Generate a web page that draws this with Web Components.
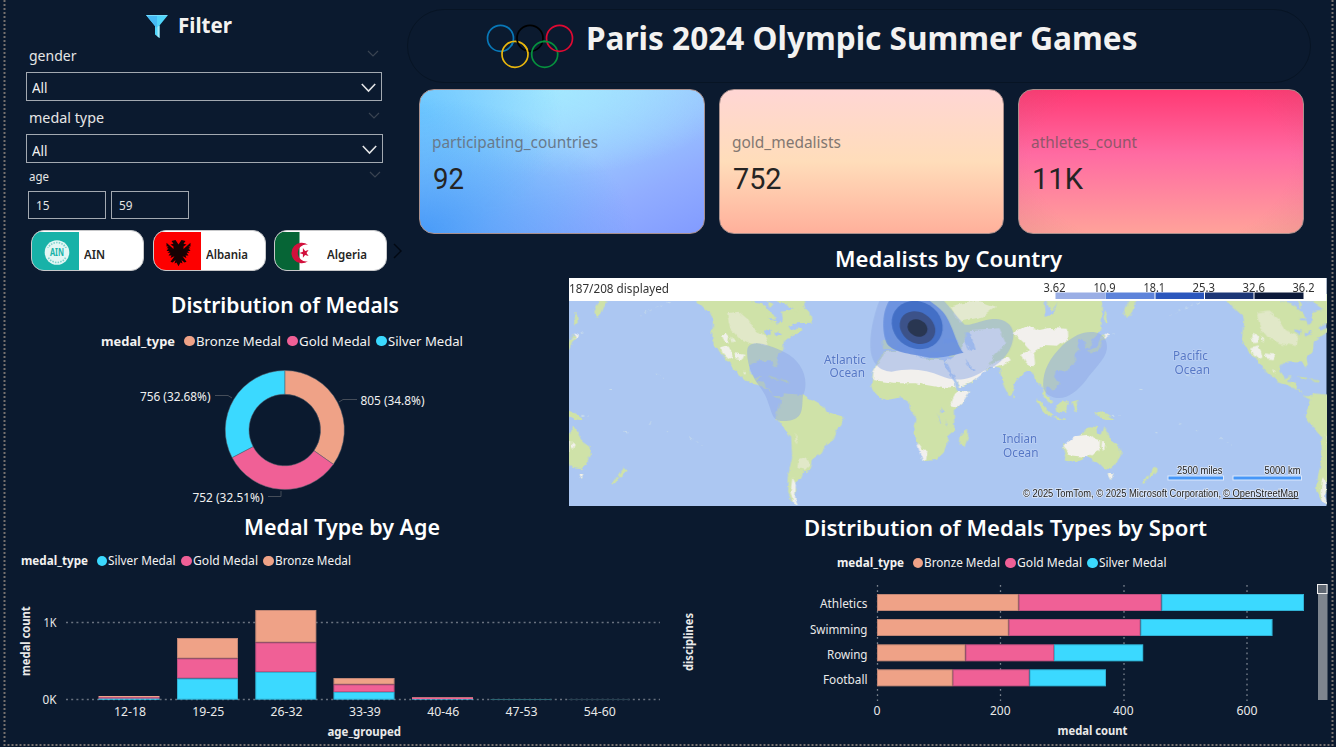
<!DOCTYPE html>
<html lang="en">
<head>
<meta charset="utf-8">
<title>Paris 2024 Olympic Summer Games</title>
<style>
html,body{margin:0;width:1336px;height:747px;overflow:hidden;background:#0b1a2f}
body{font-family:"Noto Sans","Open Sans",sans-serif;color:#f3f2f1}
</style>
</head>
<body>
<olympic-dashboard></olympic-dashboard>

<script>
const define = (name, html, setup) => customElements.define(name, class extends HTMLElement {
  connectedCallback() {
    if (this.shadowRoot) return;
    const root = this.attachShadow({ mode: 'open' });
    root.innerHTML = typeof html === 'function' ? html(this) : html;
    if (setup) setup(this, root);
  }
});

const BRONZE = '#efa287', GOLD = '#f06096', SILVER = '#3bd9ff';

/* One line of text condensed or widened to a set width */
define('fit-text', el => `<style>
  :host{display:inline-block;white-space:nowrap;width:${el.getAttribute('w')}px;flex:none}
  span{display:inline-block;transform-origin:0 50%}
</style><span><slot></slot></span>`, (el, root) => {
  const s = root.querySelector('span');
  const natural = s.getBoundingClientRect().width;
  if (natural) s.style.transform = `scaleX(${+el.getAttribute('w') / natural})`;
});

define('section-title', `<style>
  :host{display:flex;height:30px;line-height:30px;font-size:22px;font-weight:600;color:#fff}
</style><slot></slot>`);

define('chart-legend', el => {
  const colors = { Bronze: BRONZE, Gold: GOLD, Silver: SILVER };
  const items = el.getAttribute('items').split(',').map(i => i.split(':'));
  return `<style>
    :host{display:flex;align-items:center;height:18px;line-height:18px;font-size:${el.getAttribute('size')}px}
    b{font-weight:700;margin-right:${el.getAttribute('lead')}px}
    .i{display:flex;align-items:center;margin-right:${el.getAttribute('gap')}px}
    i{width:10.8px;height:10.8px;border-radius:50%;margin-right:1.2px}
  </style><b><fit-text w="${el.getAttribute('key-width')}">medal_type</fit-text></b>` +
  items.map(([n, w]) => `<span class="i"><i style="background:${colors[n]}"></i><fit-text w="${w}">${n} Medal</fit-text></span>`).join('');
});

define('slicer-label', `<style>
  :host{display:flex;justify-content:space-between;align-items:center;height:16px;line-height:16px;padding-left:29px;color:#e6e6e6}
  svg{width:12px;height:8px;position:relative;top:-2px;fill:none;stroke:#3a4452;stroke-width:1.2}
  ::slotted(fit-text){margin-top:-2px}
</style><slot></slot><svg viewBox="0 0 12 8"><path d="M1 1l5 5 5-5"/></svg>`);

define('slicer-select', `<style>
  :host{display:flex;box-sizing:border-box;height:29px;border:1.5px solid #a3a9b1;align-items:center;justify-content:space-between;padding:2px 5px 0 5px;font-size:14px}
  svg{width:15px;height:10px;fill:none;stroke:#e3e4e6;stroke-width:1.6}
</style><fit-text w="15.5">All</fit-text><svg viewBox="0 0 15 10"><path d="M.8 1l6.7 7 6.7-7"/></svg>`);

define('slicer-number', `<style>
  :host{display:block;box-sizing:border-box;width:78px;height:28px;border:1.5px solid #a3a9b1;padding:0 7px;font-size:12px;line-height:27px;color:#e4e4e4}
</style><slot></slot>`);

define('country-tile', `<style>
  :host{display:flex;box-sizing:border-box;width:113px;height:41px;border-radius:13px;border:1.5px solid #c7c8ca;background:#fff;overflow:hidden;color:#252423;font-size:12.5px;font-weight:600;align-items:center}
  ::slotted(svg){flex:none;width:47px;height:38px;margin-right:5px;align-self:flex-end}
  ::slotted(fit-text){padding-top:8px}
</style><slot></slot>`);

define('filter-panel', `<style>
  :host{display:block;padding-top:2px}
  .title{display:flex;height:46px;align-items:center;padding-left:146px;font-size:22px;font-weight:700;line-height:30px}
  .title svg{width:22px;height:24px;margin-right:10px;margin-top:4px}
  .title fit-text{margin-top:-2px}
  slicer-label{font-size:15px}
  .l1{width:350px}.l2{width:351px;margin-top:9px}.l3{width:352px;margin-top:6px;font-size:12px}
  .l3 fit-text{margin-top:0}
  .s1{width:356px;margin:8px 0 0 26px}
  .s2{width:357px;margin:8px 0 0 26px}
  .s2{padding-top:3px}
  .nums{display:flex;gap:5px;margin:6px 0 0 28px}
  .tiles{display:flex;gap:8.5px;margin:11px 0 0 31px;align-items:center}
  .next{width:9px;height:16px;fill:none;stroke:#020812;stroke-width:1.4;margin-left:-3px}
</style>
<div class="title"><svg viewBox="0 0 22 24"><path d="M0 0h11v12z" fill="#3fb5f2"/><path d="M0 0h22L13.5 10.500V23L9 19.500V11z" fill="#50d5fa"/><path d="M0 0h11v13l-2-2z" fill="#47baf4"/><path d="M13.500 10.500V23L11.500 21.500V12z" fill="#a6e9f8"/><path d="M1 .5h20" stroke="#78dcfb"/></svg><fit-text w="54">Filter</fit-text></div>
<slicer-label class="l1"><fit-text w="47.500">gender</fit-text></slicer-label>
<slicer-select class="s1"></slicer-select>
<slicer-label class="l2"><fit-text w="75">medal type</fit-text></slicer-label>
<slicer-select class="s2"></slicer-select>
<slicer-label class="l3"><fit-text w="20">age</fit-text></slicer-label>
<div class="nums"><slicer-number><fit-text w="13.500">15</fit-text></slicer-number><slicer-number><fit-text w="13.500">59</fit-text></slicer-number></div>
<div class="tiles">
  <country-tile><svg viewBox="0 0 47 38" preserveAspectRatio="none"><path fill="#18b2a8" d="M0 0h47v38H0z"/><g transform="translate(25 20.500)"><circle r="12.300" fill="#e3f6f4"/><circle r="10" fill="none" stroke="#7fd2cc" stroke-width="1.700" stroke-dasharray="1.500 1.200"/><path fill="#e3f6f4" d="M-11-4.500h22v9h-22z"/><text y="3.600" text-anchor="middle" font-size="10" font-weight="700" fill="#18b2a8" textLength="14" lengthAdjust="spacingAndGlyphs">AIN</text></g></svg><fit-text w="21">AIN</fit-text></country-tile>
  <country-tile><svg viewBox="0 0 47 38" preserveAspectRatio="none"><path fill="#fd0000" d="M0 0h47v38H0z"/><g transform="translate(24.500 9) scale(1 .9)" fill="#160203"><path d="M0 4L-3-1-7 0l2 3-3 1 3 2v3l-7-7v4h2l-2 2h2l-2 3h3l-2 2h3l-2 3h3l-1 3 4-2-4 6 2 1 3-3-1 4 2-1 2 4 2-4 2 1-1-4 3 3 2-1-4-6 4 2-1-3h3l-2-3h3l-2-2h3l-2-3h2l-2-2h2v-4l-7 7V6l3-2-3-1 2-3-4-1z"/></g></svg><fit-text w="42">Albania</fit-text></country-tile>
  <country-tile><svg viewBox="0 0 47 38" preserveAspectRatio="none"><path fill="#fff" d="M0 0h47v38H0z"/><path fill="#066536" d="M0 0h24.500v38H0z"/><path fill="#d2103c" d="M33 12.800a10.300 10.300 0 1 0 0 16.400 8.400 8.400 0 1 1 0-16.400M24.500 21l3.400-1.200v-3.700l2.200 3 3.500-1.100-2.100 3 2.100 3-3.500-1.100-2.200 2.900v-3.600z"/></svg><fit-text w="40">Algeria</fit-text></country-tile>
  <svg class="next" viewBox="0 0 9 16"><path d="M1 1l7 7-7 7"/></svg>
</div>`);

define('page-banner', `<style>
  :host{display:flex;box-sizing:border-box;width:904px;height:74px;border:1.5px solid #071424;border-radius:37px;align-items:center;padding-left:76px}
  svg{width:94px;height:50px;margin-top:-1px;fill:none;stroke-width:1.7}
  fit-text{font-size:32.500px;font-weight:700;line-height:44px;margin:-16px 0 0 8px}
</style>
<svg viewBox="484 21 94 50"><circle cx="500.500" cy="38.300" r="13" stroke="#0878b8"/><circle cx="515" cy="54.300" r="13" stroke="#e8b60d"/><circle cx="530" cy="38.300" r="13" stroke="#000"/><circle cx="544.700" cy="54.300" r="13" stroke="#06913e"/><circle cx="559.500" cy="38.300" r="13" stroke="#df0a32"/><path d="M512.800 42.500a13 13 0 0 1-1.500 3.200" stroke="#0878b8"/><path d="M527.900 52.500a13 13 0 0 0-4-7.600" stroke="#e8b60d"/><path d="M542.700 41.500a13 13 0 0 1 5.500.2" stroke="#06913e"/></svg>
<fit-text w="551.500">Paris 2024 Olympic Summer Games</fit-text>`);

define('kpi-card', `<style>
  :host{display:flex;flex-direction:column;box-sizing:border-box;height:145.500px;border-radius:15px;padding:40px 13px 0 12px;border:1px solid #a98f8c;background-origin:border-box}
  :host([tone=blue]){background:radial-gradient(ellipse 75% 95% at 0 100%,#489bf8 0,#489bf8a0 35%,#489bf800 100%),radial-gradient(ellipse 50% 90% at 0 15%,#6ec8ff 0,#6ec8ff00 100%),radial-gradient(ellipse 65% 60% at 45% 0,#a4e8ff 0,#a4e8ff00 100%),linear-gradient(155deg,#a0d8ff 25%,#98c2ff 55%,#91adff 75%,#829bff 100%)}
  :host([tone=peach]){background:linear-gradient(#ffd6d4,#ffddba 50%,#ffb09b)}
  :host([tone=pink]){background:radial-gradient(ellipse 65% 85% at 50% 50%,#99666600 70%,#99666630 110%),linear-gradient(#ff3974,#ff6ba2 45%,#ffa29a)}
  .n{font-size:16.500px;line-height:24px;color:#6d6c70}
  :host([tone=blue]) .n{color:#68798b}
  :host([tone=peach]) .n{color:#827771}
  :host([tone=pink]) .n{color:#8f576a}
  .v{font-family:Roboto,sans-serif;font-size:29.500px;line-height:36px;margin-top:7px;color:#252423;padding-left:1px}
</style><div class="n"><slot></slot></div><div class="v"><slot name="value"></slot></div>`);

define('donut-chart', `<style>
  :host{display:block}
  section-title{margin:0 0 0 171px;padding-top:9px}
  chart-legend{margin:13px 0 0 101px}
  svg{display:block;width:569px;height:155px;font-size:12px;fill:#f0f0f0}
</style>
<section-title><fit-text w="228">Distribution of Medals</fit-text></section-title>
<chart-legend key-width="74" size="13" lead="9" gap="6" items="Bronze:85,Gold:71.500,Silver:75"></chart-legend>
<svg viewBox="0 350 569 155"></svg>`, (el, root) => {
  const R = 59.5, r = 35.8, cx = 284.8, cy = 430;
  const pt = (q, f) => `${cx + q * Math.sin(f * 2 * Math.PI)} ${cy - q * Math.cos(f * 2 * Math.PI)}`;
  const arc = (a, b, c) => `<path fill="${c}" stroke="#5a6470" stroke-width=".5" d="M${pt(R, a)}A${R} ${R} 0 0 1 ${pt(R, b)}L${pt(r, b)}A${r} ${r} 0 0 0 ${pt(r, a)}z"/>`;
  root.querySelector('svg').innerHTML = arc(0, .348, BRONZE) + arc(.348, .6732, GOLD) + arc(.6732, 1, SILVER) +
    `<path d="M339 402l4-2.500h14M232 398l-4-2.500h-13M281 491v5.500h-13" fill="none" stroke="#454d59"/>
    <text x="360.500" y="405" textLength="64" lengthAdjust="spacingAndGlyphs">805 (34.8%)</text>
    <text x="140" y="401" textLength="70.500" lengthAdjust="spacingAndGlyphs">756 (32.68%)</text>
    <text x="192.500" y="502" textLength="71" lengthAdjust="spacingAndGlyphs">752 (32.51%)</text>`;
});

define('medal-map', `<style>
  :host{display:block}
  section-title{margin:-2px 0 0 266px}
  .box{width:757.500px;height:228px;margin-top:5px;overflow:hidden}
  svg{display:block;width:757.500px;height:228px}
  text{font-size:12px}
</style>
<section-title><fit-text w="227">Medalists by Country</fit-text></section-title>
<div class="box"><svg viewBox="569.500 278 757.500 228">
<defs>
 <filter id="rough" x="-5%" y="-5%" width="110%" height="110%"><feTurbulence type="fractalNoise" baseFrequency=".14" numOctaves="3" seed="4"/><feDisplacementMap in="SourceGraphic" scale="5" xChannelSelector="R" yChannelSelector="G"/></filter>
 <g id="americas" transform="translate(565 270) scale(.33333)">
  <path fill="#cfe2a8" d="M380 70L400 95 425 120 442 135 446 155 443 210 462 245 484 265 500 290 522 312 545 332 580 345 610 358 630 378 655 378 655 370 715 375 745 392 780 412 786 425 837 440 832 460 818 478 810 505 780 525 772 550 742 572 735 600 712 606 706 628 690 640 696 662 690 682 700 706 678 688 668 665 670 620 683 560 680 500 650 465 633 440 640 415 650 388 628 380 618 360 605 352 600 338 580 335 592 318 570 325 555 305 556 285 582 274 622 274 632 292 640 284 636 264 656 240 658 215 685 195 715 180 702 172 678 182 672 172 700 160 742 158 738 130 715 105 715 70z"/>
  <path fill="#acc7f2" d="M560 95L590 110 600 130 618 150 636 152 640 165 655 150 652 125 690 118 676 98 640 96 615 70 560 70zM600 178l22 5-4 12-16-4zM630 190l18-6 4 6-20 10z"/>
  <path fill="#cfe2a8" d="M650 70h60l10 30-25 24-30-20zM605 92l22 10-10 12zM560 92l30 8 25 20 20 26-25-2-30-26z"/>
  <path fill="#e1e8c8" d="M488 130l35-5 30 25 18 30 40 20-4 28-50-8-34-15-26-30z"/>
  <path fill="#f0f1ea" d="M470 200l14-10 10 12-3 16-14 2zM470 235l22-6 8 14 4 20-12 4-16-16zM510 250l30 4-6 14-20-4zM500 195l10 16-4 8zM536 300l8 8-4 3zM684 622l10 20-2 40 8 22-14-8-8-30z"/>
  <path fill="#e1e8c8" d="M702 570l25-8 10 22-16 16-22-6zM690 490l10 20-4 12z"/>
  <path fill="#c7dcae" d="M610 315l24 8 8 6-20-1zM645 328l24 2 8 8-20-2z"/>
 </g>
 <g id="east" transform="translate(1070 270) scale(.33333)">
  <path fill="#cfe2a8" d="M175 100L188 70 200 95 188 125 172 148 165 125zM105 122l8 12 2 26-8 4zM55 242l28-12 8-22 9-16 12 10-14 14-8 22-26 16zM0 530L24 505 48 478 62 472 80 474 84 490 96 494 104 468 118 494 125 512 150 530 154 556 140 585 124 598 100 594 86 580 74 572 50 560 20 572 0 577-10 575-18 540-20 518zM74 428l14-6 24 10 22 14-16 4-18-6zM118 612l14 1-6 14zM254 592l10 10-22 22-4-8zM234 616l4 8-14 20-8-2z"/>
  <path fill="#f3f1ed" d="M0 512L20 498 60 494 78 510 92 514 90 540 70 550 54 562 20 558 0 556-18 530zM98 512l10 12-4 16-8-10zM118 612l14 1-6 14zM104 190l14 6-8 8z"/>
 </g>
 <g id="afroasia" transform="translate(820 270) scale(.33333)">
  <path fill="#cfe2a8" d="M190 238L190 210 218 208 206 182 228 165 240 140 255 115 250 70H810L848 70 846 180 820 205 812 232 798 236 796 212 776 214 780 240 765 255 768 275 748 297 724 305 708 302 704 320 720 345 700 362 688 350 678 348 682 375 698 396 692 402 676 384 664 342 650 336 640 312 626 300 606 314 584 342 580 368 570 377 550 340 540 296 528 290 500 300 488 308 458 338 420 352 402 330 376 276 410 260 370 255 355 240 335 250 318 232 296 215 310 242 290 235 270 215 240 218 225 237z"/>
  <path fill="#cfe2a8" d="M190 248L250 240 275 240 276 256 310 268 330 260 372 268 400 330 414 360 452 365 432 395 403 424 405 480 382 500 386 515 372 545 348 570 310 574 300 530 283 490 291 446 270 418 270 398 246 382 202 390 176 380 155 350 160 310 175 275zM445 475l2 20-12 34-14-4 2-24zM582 372l6 8-6 6zM655 385l20 22 24 28-8 6-22-20-16-24zM710 408l30-18 8 8-10 30-24-4zM700 440l40 6-2 4-38-5zM756 395l22-6-10 10 6 18-8 14z"/>
  <path fill="#f2f0ed" d="M195 250L275 240 305 265 372 268 403 333 408 350 372 354 290 340 236 340 160 330 162 305zM378 274L424 240 450 180 540 175 560 220 520 260 500 300 488 312 458 336 420 352zM414 362l38 3-18 28-22 20-20-4 8-22zM500 295l30-25 36-8 8 12-28 14-20 6zM580 188l40-20 40 12 30-6 55 2 2 30-32 24-48-2-24 18 4 40-22-2-20-32 28-12-18-20zM310 540l14 4-4 26-10 2-10-28-8-28z"/>
  <path fill="#e3e9cf" d="M390 110l80-20 60 20-40 30-70 15z"/>
  <path fill="#acc7f2" d="M375 275l10 8 26 50 6 24-14-24-26-44zM438 265l12 20 18 12-4 5-20-14zM375 205l35 3 6 12-42-2zM440 185l14 8 12 46-14 4-16-30zM675 85l20 40 18-26-12 34-22 8zM366 410l7 12-8 8zM356 430l8 30-4 2zM380 450l5 20-4 2z"/>
 </g>
 <g id="islands" transform="translate(565 270) scale(.33333)"><path fill="none" stroke="#c9dceb" stroke-width="3" stroke-dasharray="9 14 4 10" d="M315 97L285 108 225 138M60 188L38 198M20 205l25-8M50 436l25 1M132 358l20 2M180 484l20 4M255 465l4-8M305 482h5M275 312l28 12M378 502l32 22"/></g>
</defs>
<path fill="#acc7f2" d="M569 278h758v228H569z"/>
<g filter="url(#rough)"><use href="#americas"/><use href="#americas" x="530"/><use href="#east"/><use href="#east" x="-530"/><use href="#afroasia"/><use href="#islands"/><use href="#islands" x="530"/></g>
<g transform="translate(820 270) scale(.33333)">
 <path fill="#8ea9e6" fill-opacity=".5" d="M190 70C165 120 150 190 153 235C157 290 190 304 216 305C270 293 320 297 365 318C410 338 455 328 492 303C545 288 582 240 582 193C580 160 550 144 520 147C485 150 455 168 436 164C410 142 390 105 350 70z"/>
 <path fill="#6990df" fill-opacity=".93" d="M215 85C185 120 187 190 203 222C225 250 280 252 330 263C370 265 400 255 432 248C410 225 400 160 370 125C350 105 335 97 320 85z"/>
 <ellipse cx="293" cy="165" rx="79" ry="70" transform="rotate(32 293 165)" fill="#436fc6"/><ellipse cx="294" cy="173" rx="56" ry="46" transform="rotate(32 294 173)" fill="#3c5289"/><ellipse cx="294" cy="174" rx="31" ry="25" transform="rotate(25 294 174)" fill="#293651"/>
 <path fill="#8fa9e6" fill-opacity=".5" d="M671 345C671 300 690 265 730 225C765 195 790 184 822 186C850 189 865 210 862 238C857 270 820 300 800 330C775 362 745 387 712 384C690 380 672 370 671 345z"/>
 <path fill="#8fa9e6" fill-opacity=".5" d="M-217 242C-216 222-196 216-170 222C-120 235-80 255-60 285C-40 315-37 350-50 378C-52 400-50 425-62 438C-75 452-95 454-116 453C-143 450-143 425-155 395C-166 360-188 345-201 315C-213 288-218 265-217 242z"/>
</g>
<path fill="#fff" d="M569 278h758v23H569z"/>
<g fill="#333"><text x="569.500" y="293" textLength="100">187/208 displayed</text></g>
<path fill="#9aaee5" d="M1056 292.500h49.500v6.500h-49.500z"/><path fill="#5d83da" d="M1106 292.500h49v6.500h-49z"/><path fill="#2b57bd" d="M1156 292.500h48.500v6.500H1156z"/><path fill="#1c3777" d="M1205.500 292.500h48.500v6.500h-48.500z"/><path fill="#0c1a3b" d="M1255 292.500h49v6.500h-49z"/>
<g fill="#333"><text x="1044" y="292" textLength="22">3.62</text><text x="1094" y="292" textLength="22">10.9</text><text x="1144" y="292" textLength="21.500">18.1</text><text x="1193" y="292" textLength="22.500">25.3</text><text x="1243" y="292" textLength="22.500">32.6</text><text x="1293" y="292" textLength="22">36.2</text></g>
<g fill="#5678c6" stroke="#bcd0f4" stroke-width="1.500" paint-order="stroke"><text><tspan x="824.500" y="364" textLength="42">Atlantic</tspan><tspan x="830" y="377" textLength="35.500">Ocean</tspan></text><text><tspan x="1003" y="443" textLength="34.500">Indian</tspan><tspan x="1003.500" y="456.500" textLength="35.500">Ocean</tspan></text><text><tspan x="1173.500" y="360" textLength="35">Pacific</tspan><tspan x="1175" y="373.500" textLength="35.500">Ocean</tspan></text></g>
<path d="M1168 478h56.500M1233 478h69.500" stroke="#dbe8fb" stroke-width="5"/><path d="M1169 478h54.500M1234 478h67.500" stroke="#4797f8" stroke-width="3"/>
<g fill="#222" stroke="#e2ebf9" stroke-width="1.500" paint-order="stroke" font-family="Liberation Sans,sans-serif"><text x="1177.500" y="474" style="font-size:10px" textLength="45.500">2500 miles</text><text x="1265" y="474" style="font-size:10px" textLength="36">5000 km</text><text x="1023.500" y="497" style="font-size:10px" textLength="198">© 2025 TomTom, © 2025 Microsoft Corporation,</text><text x="1223.500" y="497" style="font-size:10px" textLength="75.500">© OpenStreetMap</text></g><path d="M1223.500 498.500h75.500" stroke="#333"/>
</svg></div>`, (el, root) => root.querySelectorAll('[textLength]').forEach(t => t.setAttribute('lengthAdjust', 'spacingAndGlyphs')));

const txt = (x, y, w, s, extra = '') => `<text x="${x}" y="${y}" textLength="${w}" lengthAdjust="spacingAndGlyphs" ${extra}>${s}</text>`;
const rect = (x, y, x2, y2, c) => `<rect x="${x}" y="${y}" width="${x2 - x}" height="${y2 - y}" fill="${c}"/>`;
const outline = (x, y, x2, y2) => `<rect x="${x + .5}" y="${y + .5}" width="${x2 - x - 1}" height="${y2 - y - 1}" fill="none" stroke="#0b1a2f" stroke-opacity=".2"/>`;

define('age-chart', `<style>
  :host{display:block}
  section-title{margin:1px 0 0 243.500px}
  chart-legend{margin:11px 0 0 21px}
  svg{display:block;width:680px;height:177px;font-size:12px;fill:#e9e9e9}
</style>
<section-title><fit-text w="196">Medal Type by Age</fit-text></section-title>
<chart-legend key-width="67" size="12" lead="8.500" gap="5" items="Silver:67.500,Gold:65,Bronze:76"></chart-legend>
<svg viewBox="0 570 680 177"></svg>`, (el, root) => {
  let s = `<path d="M66 622.500H660M66 699.500H660" stroke="#69727f" stroke-width="1.300" stroke-dasharray="2 3.200"/>`;
  [[98.5, 696, 697.3, 698.7], [177, 638, 658.5, 678.5], [255.3, 610, 642.5, 672], [333.5, 678, 684.5, 692], [412, 697, 697.7, 699.2]]
    .forEach(([x, a, b, c]) => {
      s += rect(x, a, x + 61, b, BRONZE) + rect(x, b, x + 61, c, GOLD) + rect(x, c, x + 61, 699.7, SILVER);
      if (699 - a > 10) s += outline(x, a, x + 61, b) + outline(x, b, x + 61, c) + outline(x, c, x + 61, 699.7);
    });
  s += rect(490.5, 699, 551.5, 700, '#2b6472') + rect(568.5, 699, 629.5, 700, '#263f50');
  ['12-18', '19-25', '26-32', '33-39', '40-46', '47-53', '54-60'].forEach((l, i) => s += txt(114 + i * 78.3, 716, 32, l));
  s += txt(43.5, 627, 13, '1K') + txt(42.5, 704, 14, '0K') + txt(327.5, 735.5, 73.5, 'age_grouped', 'font-weight="700"');
  s += `<g transform="translate(30 676)rotate(-90)">${txt(0, 0, 69.5, 'medal count', 'font-weight="700"')}</g>`;
  root.querySelector('svg').innerHTML = s;
});

define('sport-chart', `<style>
  :host{display:block}
  section-title{margin:2px 0 0 123.500px}
  chart-legend{margin:12px 0 0 157px}
  svg{display:block;width:656px;height:175px;font-size:12px;fill:#e9e9e9}
</style>
<section-title><fit-text w="403">Distribution of Medals Types by Sport</fit-text></section-title>
<chart-legend key-width="67" size="12" lead="8.500" gap="5" items="Bronze:76,Gold:65,Silver:67.500"></chart-legend>
<svg viewBox="680 572 656 175"></svg>`, (el, root) => {
  let s = `<path d="M877.500 585V702M1000.500 585V702M1124 585V702M1247 585V702" stroke="#7b838e" stroke-width="1.300" stroke-dasharray="1.700 3.500"/>`;
  [[594, 1018.7, 1161.5, 1304, 'Athletics', 820, 608], [619, 1008.7, 1140.5, 1272.5, 'Swimming', 810, 634], [644.3, 965.5, 1054, 1143.2, 'Rowing', 827, 659], [669.3, 952.8, 1029.5, 1106, 'Football', 823, 684]]
    .forEach(([y, a, b, c, l, tx, ty]) => {
      s += rect(877, y, a, y + 17, BRONZE) + rect(a, y, b, y + 17, GOLD) + rect(b, y, c, y + 17, SILVER) +
        outline(877, y, a, y + 17) + outline(a, y, b, y + 17) + outline(b, y, c, y + 17) + txt(tx, ty, 867.5 - tx, l);
    });
  [[873.5, 7, '0'], [990, 20.5, '200'], [1113, 20.5, '400'], [1236.5, 21, '600']].forEach(([x, w, l]) => s += txt(x, 715, w, l));
  s += txt(1057.5, 735, 70, 'medal count', 'font-weight="700"');
  s += `<g transform="translate(692.500 671)rotate(-90)">${txt(0, 0, 58, 'disciplines', 'font-weight="700"')}</g>`;
  s += rect(1318, 584, 1327.5, 700, '#7e858e') + `<rect x="1317.500" y="584.500" width="9.500" height="9" fill="#606873" stroke="#f0f0f0"/>`;
  root.querySelector('svg').innerHTML = s;
});

define('olympic-dashboard', `<style>
  :host{display:grid;position:relative;width:1336px;height:747px;grid-template-columns:407px 162px 111px 656px;grid-template-rows:245px 35px 230px 237px;overflow:hidden}
  filter-panel{grid-area:1/1/3/2}
  header{grid-area:1/2/2/5;padding-top:9px}
  .cards{display:grid;grid-template-columns:286.500px 285.500px 286.500px;gap:13.500px;padding:5.500px 0 0 11.500px}
  donut-chart{grid-area:3/1/4/3}
  medal-map{grid-area:2/3/4/5}
  age-chart{grid-area:4/1/5/4}
  sport-chart{grid-area:4/4/5/5}
  .frame{position:absolute;inset:0;width:1336px;height:747px;pointer-events:none;fill:none;stroke:#77716f;stroke-width:2;stroke-dasharray:2 2}
</style>
<filter-panel></filter-panel>
<header><page-banner></page-banner>
<div class="cards">
<kpi-card tone="blue"><fit-text w="166">participating_countries</fit-text><fit-text slot="value" w="31">92</fit-text></kpi-card>
<kpi-card tone="peach"><fit-text w="109">gold_medalists</fit-text><fit-text slot="value" w="48.500">752</fit-text></kpi-card>
<kpi-card tone="pink"><fit-text w="106">athletes_count</fit-text><fit-text slot="value" w="51">11K</fit-text></kpi-card>
</div></header>
<donut-chart></donut-chart>
<medal-map></medal-map>
<age-chart></age-chart>
<sport-chart></sport-chart>
<svg class="frame"><path d="M4.500 0V745H1332.500V0"/></svg>`);
</script>
</body>
</html>
